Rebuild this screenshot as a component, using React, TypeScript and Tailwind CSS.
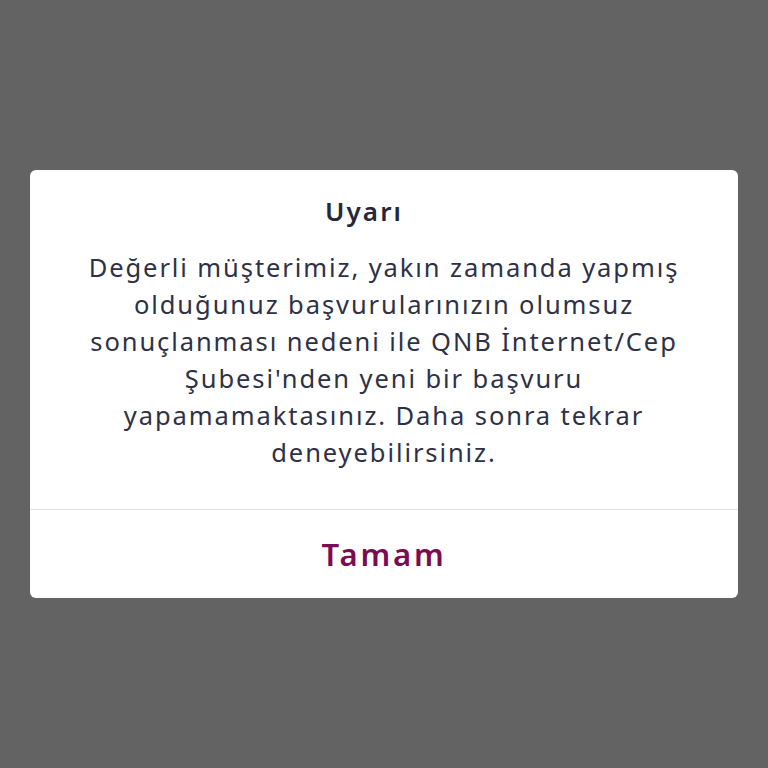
import React from 'react';

const lines = [
  'Değerli müşterimiz, yakın zamanda yapmış',
  'olduğunuz başvurularınızın olumsuz',
  "sonuçlanması nedeni ile QNB İnternet/Cep",
  "Şubesi'nden yeni bir başvuru",
  'yapamamaktasınız. Daha sonra tekrar',
  'deneyebilirsiniz.',
];

export default function App() {
  return (
    <div
      className="w-full h-screen bg-[#636363] flex items-center justify-center"
      style={{ fontFamily: '"Noto Sans", Lato, sans-serif' }}
    >
      <div className="w-[708px] bg-white rounded-[6px] overflow-hidden">
        <div className="pt-[23px] pb-[38px] px-6 text-center">
          <h2 className="pr-[40px] text-[26px] leading-[36px] font-semibold tracking-[0.08em] text-[#262839]">Uyarı</h2>
          <p className="mt-[20px] text-[25.5px] leading-[37px] tracking-[0.075em] text-[#2e3146]">
            {lines.map((l, i) => (
              <span key={i} className="block">
                {l}
              </span>
            ))}
          </p>
        </div>
        <div className="border-t border-[#e2e2e2]">
          <button className="w-full h-[88px] flex items-center justify-center text-[31px] font-semibold tracking-[0.09em] text-[#7b0b55]">
            Tamam
          </button>
        </div>
      </div>
    </div>
  );
}
